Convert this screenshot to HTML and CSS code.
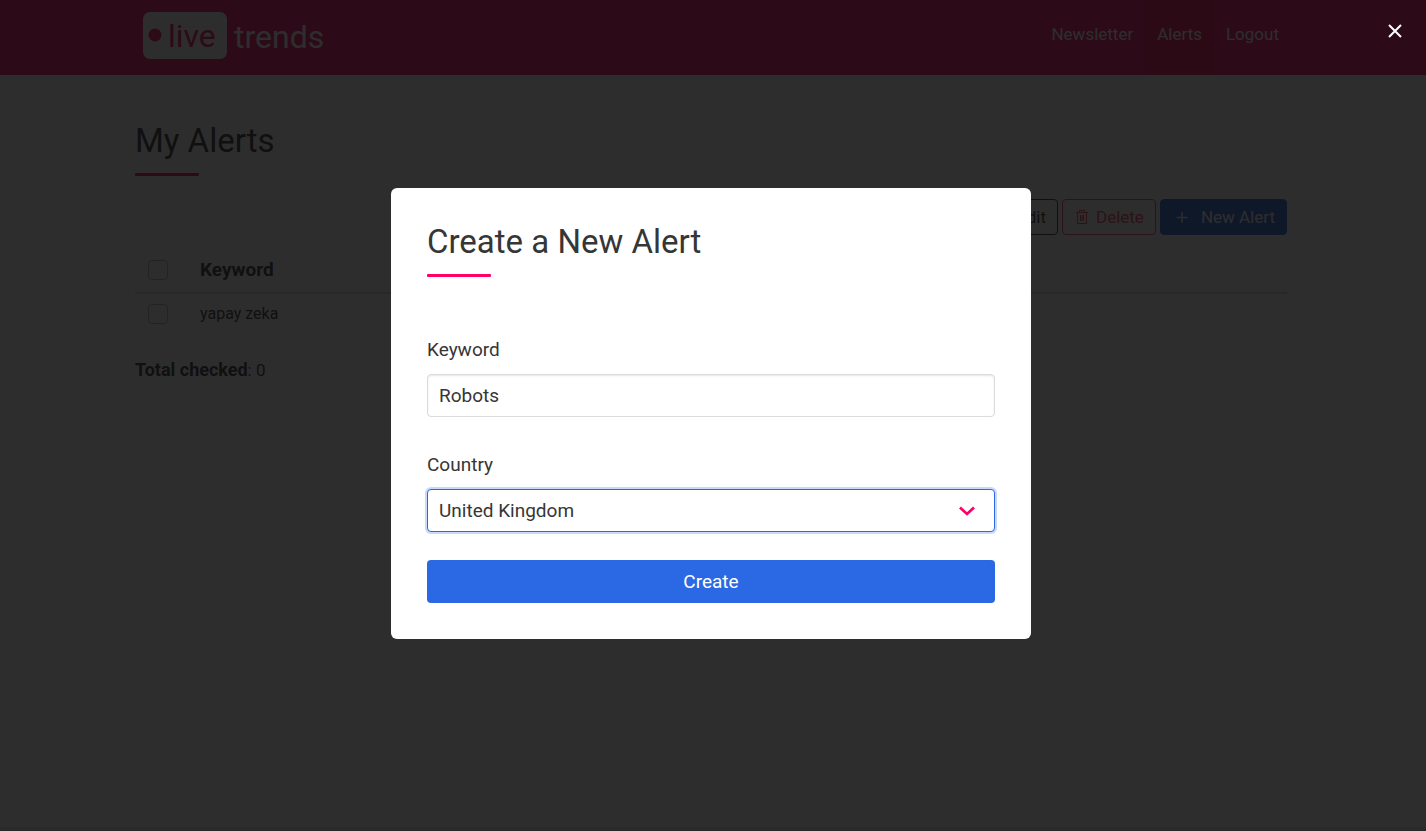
FILE: index.html
```
<!DOCTYPE html>
<html lang="en">
<head>
    <meta charset="utf-8">
    <meta name="viewport" content="width=device-width, initial-scale=1">
    <title>Live Trends - My Alerts</title>
    <link rel="stylesheet" href="styles.css">
</head>
<body>
    <nav class="navbar">
        <div class="container navbar-inner">
            <a class="navbar-brand" href="#" aria-label="live trends">
                <svg class="logo" width="184" height="48" viewBox="0 0 184 48">
                    <rect x="0" y="0" width="84" height="47" rx="7" fill="#fff"/>
                    <circle cx="12" cy="23" r="6.5" fill="#f70a67"/>
                    <text x="25" y="35" fill="#f70a67">live</text>
                    <text x="91" y="36" fill="#fff">trends</text>
                </svg>
            </a>
            <div class="navbar-menu">
                <a class="navbar-item" href="#">Newsletter</a>
                <a class="navbar-item is-active" href="#">Alerts</a>
                <a class="navbar-item" href="#">Logout</a>
            </div>
        </div>
    </nav>

    <main class="container">
        <h1 class="title">My Alerts</h1>
        <div class="buttons">
            <button class="button" type="button">Edit</button>
            <button class="button is-danger" type="button">
                <svg width="16" height="16" viewBox="0 0 16 16" fill="none" stroke="currentColor">
                    <path d="M2 3.5h12M5.5 3.5v-2h5v2M3.5 3.5v11h9v-11M6.5 6v6M8 6v6M9.5 6v6"/>
                </svg>
                Delete
            </button>
            <button class="button is-link" type="button">
                <svg width="23" height="16" viewBox="0 0 23 16" fill="none" stroke="currentColor" stroke-width="1.4">
                    <path d="M10 3v11M4.5 8.500h11"/>
                </svg>
                New Alert
            </button>
        </div>

        <table class="table">
            <thead>
                <tr>
                    <th class="check-cell"><input class="checkbox" type="checkbox" aria-label="Select all"></th>
                    <th>Keyword</th>
                </tr>
            </thead>
            <tbody>
                <tr>
                    <td class="check-cell"><input class="checkbox" type="checkbox" aria-label="Select yapay zeka"></td>
                    <td>yapay zeka</td>
                </tr>
            </tbody>
        </table>
        <p class="total"><strong>Total checked</strong>: 0</p>
    </main>

    <footer class="footer"></footer>

    <div class="modal">
        <div class="modal-card" role="dialog" aria-labelledby="modalTitle">
            <h2 class="title" id="modalTitle">Create a New Alert</h2>
            <form class="form">
                <div class="field">
                    <label class="label" for="keyword">Keyword</label>
                    <input class="input" type="text" id="keyword" value="Robots">
                </div>
                <div class="field">
                    <label class="label" for="country">Country</label>
                    <div class="select">
                        <select class="input is-focused" id="country">
                            <option>Turkey</option>
                            <option selected>United Kingdom</option>
                            <option>United States</option>
                        </select>
                        <svg class="select-arrow" width="16" height="20" viewBox="0 0 16 20" fill="none">
                            <path d="M1.5 7L8 .5 14.500 7" stroke="#ffe0ec" stroke-width=".6"/>
                            <path d="M1 7.500l7 6.500 7-6.500" stroke="#ff0066" stroke-width="2.700"/>
                        </svg>
                    </div>
                </div>
                <button class="submit" type="button">Create</button>
            </form>
        </div>
        <button class="modal-close" type="button" aria-label="Close">
            <svg width="14" height="14" viewBox="0 0 14 14" stroke="#fff" stroke-width="2">
                <path d="M1 1l12 12M13 1L1 13"/>
            </svg>
        </button>
    </div>
</body>
</html>
```
FILE: styles.css
```
* {
    box-sizing: border-box;
}

body {
    margin: 0;
    min-height: 100vh;
    display: flex;
    flex-direction: column;
    background-color: #fff;
    color: #363636;
    font-family: Roboto, "Liberation Sans", sans-serif;
    font-size: 16px;
    line-height: 24px;
}

button,
input,
select {
    font-family: inherit;
}

/* Navbar */
.navbar {
    background-color: #f70a67;
    padding-right: 4px;
}

.container {
    width: 100%;
    max-width: 1152px;
    margin: 0 auto;
}

.navbar-inner {
    display: flex;
    justify-content: space-between;
    align-items: stretch;
    height: 75px;
    padding-left: 8px;
}

.navbar-brand {
    padding-top: 12px;
}

.logo {
    display: block;
    font-family: Roboto, sans-serif;
    font-size: 32px;
}

.navbar-menu {
    display: flex;
    margin-right: -4px;
}

.navbar-item {
    display: flex;
    align-items: center;
    padding: 0 12px 8px;
    color: #fff;
    font-size: 17px;
    text-decoration: none;
}

.navbar-item.is-active {
    background-color: #f40a58;
}

/* Page */
main {
    flex: 1;
    padding-top: 48px;
}

main.container {
    max-width: 1156px;
    padding-right: 4px;
}

.title {
    margin: 0;
    font-size: 33px;
    font-weight: 400;
    line-height: 36px;
}

.title::after {
    content: "";
    display: block;
    width: 64px;
    height: 3px;
    margin-top: 14px;
    border-radius: 1px;
    background-color: #f06;
}

.buttons {
    display: flex;
    justify-content: flex-end;
    gap: 4px;
    margin-top: 23px;
}

.button {
    display: flex;
    align-items: center;
    gap: 6px;
    height: 36px;
    padding: 0 11px;
    border: 1px solid #363636;
    border-radius: 4px;
    background-color: transparent;
    color: #363636;
    font-size: 17px;
    cursor: pointer;
}

.button.is-danger {
    border-color: #f14668;
    color: #f14668;
}

.button.is-link {
    border-color: #2b68e4;
    background-color: #2b68e4;
    color: #fff;
}

.table {
    width: 100%;
    margin-top: 12px;
    border-collapse: collapse;
}

.table th,
.table td {
    padding: 8px 12px;
    text-align: left;
    vertical-align: middle;
}

.table th {
    height: 46px;
    border-bottom: 2px solid #dbdbdb;
    font-size: 19px;
    font-weight: 700;
}

.table .check-cell {
    width: 53px;
    padding-left: 13px;
}

.checkbox {
    appearance: none;
    display: block;
    width: 20px;
    height: 20px;
    margin: 0;
    border: 1px solid #b5b5b5;
    border-radius: 4px;
}

.total {
    margin: 24px 0 0;
    font-size: 17px;
}

.total strong {
    font-size: 18px;
    font-weight: 700;
}

.footer {
    height: 4px;
    background-color: #f0e4e9;
}

/* Modal */
.modal {
    position: fixed;
    inset: 0;
    display: flex;
    align-items: center;
    justify-content: center;
    padding: 0 4px 4px 0;
    background-color: rgba(10, 10, 10, 0.86);
}

.modal-card {
    width: 640px;
    max-width: 100%;
    padding: 36px;
    border-radius: 6px;
    background-color: #fff;
}

.form {
    margin-top: 60px;
}

.field + .field {
    margin: 35px 0 28px;
}

.label {
    display: block;
    margin-bottom: 12px;
    font-size: 19px;
    line-height: 25px;
}

.input {
    display: block;
    width: 100%;
    height: 43px;
    padding: 0 11px;
    border: 1px solid #dbdbdb;
    border-radius: 4px;
    outline: none;
    background-color: #fff;
    box-shadow: inset 0 1px 2px rgba(10, 10, 10, 0.1);
    color: #363636;
    font-size: 19px;
    appearance: none;
}

.input:focus,
.input.is-focused {
    border-color: #2b68e4;
    box-shadow: 0 0 0 2px rgba(43, 104, 228, 0.25);
}

.select {
    position: relative;
}

.select-arrow {
    position: absolute;
    top: 11px;
    right: 20px;
    pointer-events: none;
}

.submit {
    display: block;
    width: 100%;
    height: 43px;
    border: none;
    border-radius: 4px;
    background-color: #2b68e4;
    color: #fff;
    font-size: 19px;
    cursor: pointer;
}

.modal-close {
    position: absolute;
    top: 11px;
    right: 11px;
    display: flex;
    align-items: center;
    justify-content: center;
    width: 40px;
    height: 40px;
    padding: 0;
    border: none;
    background: none;
    cursor: pointer;
}
```
